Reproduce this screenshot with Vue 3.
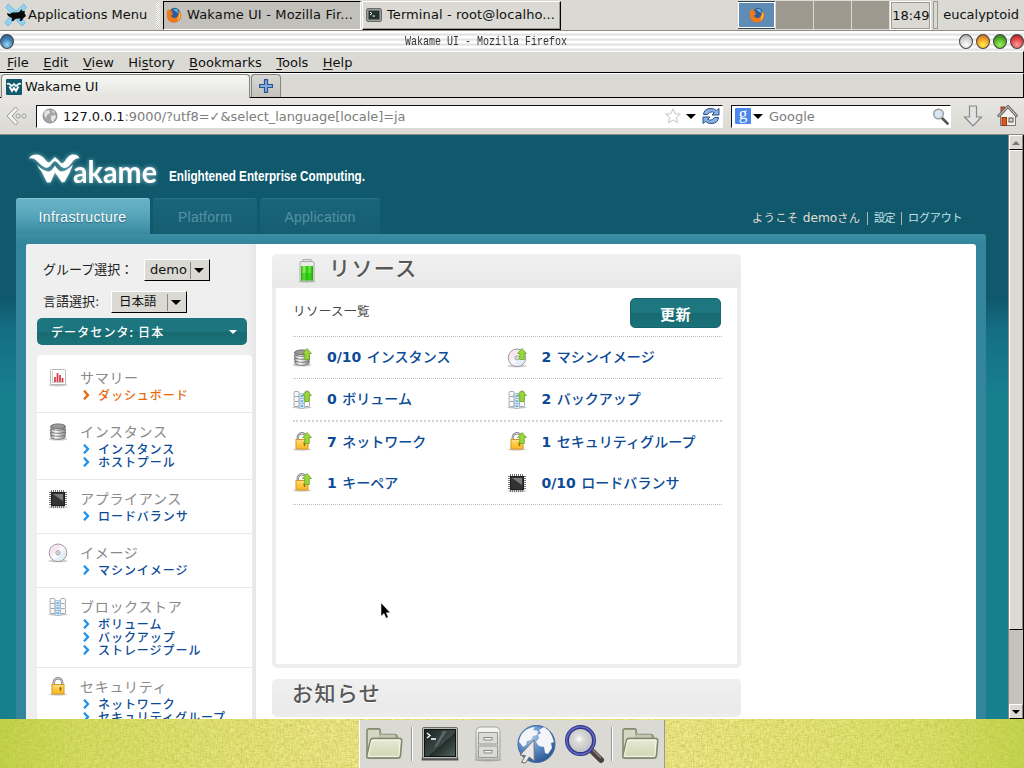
<script setup>
const menus = ['File', 'Edit', 'View', 'History', 'Bookmarks', 'Tools', 'Help'].map((m) => {
  const at = m === 'History' ? 2 : 0
  return { pre: m.slice(0, at), key: m[at], post: m.slice(at + 1) }
})

const groups = [
  { icon: 'i-chart', title: 'サマリー', links: ['ダッシュボード'], active: true },
  { icon: 'i-db', title: 'インスタンス', links: ['インスタンス', 'ホストプール'] },
  { icon: 'i-chip', title: 'アプライアンス', links: ['ロードバランサ'] },
  { icon: 'i-disc', title: 'イメージ', links: ['マシンイメージ'] },
  { icon: 'i-blocks', title: 'ブロックストア', links: ['ボリューム', 'バックアップ', 'ストレージプール'] },
  { icon: 'i-lock', title: 'セキュリティ', links: ['ネットワーク', 'セキュリティグループ'] },
]

const rows = [
  [
    { icon: 'i-db', up: true, n: '0/10', t: 'インスタンス' },
    { icon: 'i-disc', up: true, n: '2', t: 'マシンイメージ' },
  ],
  [
    { icon: 'i-blocks', up: true, n: '0', t: 'ボリューム' },
    { icon: 'i-blocks', up: true, n: '2', t: 'バックアップ' },
  ],
  [
    { icon: 'i-lock', up: true, n: '7', t: 'ネットワーク' },
    { icon: 'i-lock', up: true, n: '1', t: 'セキュリティグループ' },
  ],
  [
    { icon: 'i-lock', up: true, n: '1', t: 'キーペア' },
    { icon: 'i-chip', up: false, n: '0/10', t: 'ロードバランサ' },
  ],
]
</script>

<template>
  <div class="desktop">
    <svg class="defs" width="0" height="0">
      <defs>
        <linearGradient id="g-metal" x1="0" x2="1" y1="0" y2="0">
          <stop offset="0" stop-color="#999" /><stop offset=".35" stop-color="#fff" /><stop offset="1" stop-color="#888" />
        </linearGradient>
        <linearGradient id="g-gold" x1="0" x2="0" y1="0" y2="1">
          <stop offset="0" stop-color="#ffe08a" /><stop offset=".5" stop-color="#fcc93a" /><stop offset="1" stop-color="#f9b62a" />
        </linearGradient>
        <linearGradient id="g-disc" x1="0" x2="1" y1="0" y2="1">
          <stop offset="0" stop-color="#f2f6fb" /><stop offset=".3" stop-color="#f8e2f2" /><stop offset=".5" stop-color="#fcfcfc" />
          <stop offset=".7" stop-color="#e0ecfb" /><stop offset="1" stop-color="#eefbe4" />
        </linearGradient>
        <linearGradient id="g-green" x1="0" x2="1" y1="0" y2="0">
          <stop offset="0" stop-color="#2fa70a" /><stop offset=".25" stop-color="#9cf26a" /><stop offset=".5" stop-color="#22c410" /><stop offset=".7" stop-color="#66ee3c" /><stop offset="1" stop-color="#1fa008" />
        </linearGradient>
        <linearGradient id="g-folder" x1="0" x2="0" y1="0" y2="1">
          <stop offset="0" stop-color="#e6ead6" /><stop offset="1" stop-color="#cdd6b0" />
        </linearGradient>
        <linearGradient id="g-cab" x1="0" x2="0" y1="0" y2="1">
          <stop offset="0" stop-color="#f7f7f5" /><stop offset="1" stop-color="#c4c4c0" />
        </linearGradient>
        <linearGradient id="g-term" x1="0" x2="1" y1="0" y2="1">
          <stop offset="0" stop-color="#1b2422" /><stop offset=".55" stop-color="#3c4a46" /><stop offset=".56" stop-color="#222d2a" /><stop offset="1" stop-color="#53635e" />
        </linearGradient>
        <radialGradient id="g-globe" cx=".35" cy=".3" r=".75">
          <stop offset="0" stop-color="#a9c8ea" /><stop offset=".5" stop-color="#5c8cc6" /><stop offset="1" stop-color="#2a5592" />
        </radialGradient>
        <radialGradient id="g-lens" cx=".45" cy=".45" r=".6">
          <stop offset="0" stop-color="#fff" /><stop offset=".25" stop-color="#dcdcda" /><stop offset="1" stop-color="#b5b7bb" />
        </radialGradient>
        <radialGradient id="g-fox" cx=".5" cy=".3" r=".7">
          <stop offset="0" stop-color="#ffd23c" /><stop offset=".6" stop-color="#f58a1c" /><stop offset="1" stop-color="#c8401a" />
        </radialGradient>
        <symbol id="i-chart" viewBox="0 0 20 20">
          <ellipse cx="10" cy="17" rx="9.5" ry="1.4" fill="#ccc" />
          <rect x="2.5" y="1.500" width="15" height="15" rx="1" fill="#fff" stroke="#b9b9b9" />
          <path d="M4.500 3.500v11h11.500" fill="none" stroke="#999" stroke-dasharray="1 1" />
          <path d="M7 14V9M9.500 14V5M12 14V7M14.500 14v-4" stroke="#d8343c" stroke-width="1.700" />
        </symbol>
        <symbol id="i-db" viewBox="0 0 20 20">
          <ellipse cx="10" cy="17" rx="9.500" ry="1.600" fill="#ccc" />
          <g fill="url(#g-metal)" stroke="#6a6a6a" stroke-width=".8">
            <path d="M2.800 13v1.600c0 3.600 14.400 3.600 14.400 0V13z" /><path d="M2.400 10v1.600c0 3.600 15.200 3.600 15.200 0V10z" />
            <path d="M2.400 7v1.600c0 3.600 15.200 3.600 15.200 0V7z" /><path d="M2.800 4v1.600c0 3.600 14.400 3.600 14.400 0V4z" />
          </g>
          <ellipse cx="10" cy="4.300" rx="7.200" ry="2.400" fill="#999" stroke="#606060" stroke-width=".8" />
        </symbol>
        <symbol id="i-chip" viewBox="0 0 20 20">
          <ellipse cx="10" cy="18" rx="9.800" ry="1.300" fill="#ccc" />
          <path d="M3.500 1v18M5.500 1v18M7.500 1v18M9.500 1v18M11.500 1v18M13.500 1v18M15.500 1v18M1 3.500h18M1 5.500h18M1 7.500h18M1 9.500h18M1 11.500h18M1 13.500h18M1 15.500h18" stroke="#777" />
          <rect x="3.500" y="3.500" width="13" height="13" fill="#333" stroke="#1f1f1f" />
          <path d="M5 5h10v7z" fill="#999" opacity=".7" />
        </symbol>
        <symbol id="i-disc" viewBox="0 0 20 20">
          <ellipse cx="10" cy="18" rx="9.800" ry="1.300" fill="#ccc" />
          <circle cx="10" cy="9.800" r="8.800" fill="url(#g-disc)" stroke="#929292" stroke-width=".9" />
          <circle cx="10" cy="9.800" r="2.100" fill="#fff" stroke="#8c8c8c" stroke-width=".9" />
          <circle cx="10" cy="9.800" r=".7" fill="#888" />
        </symbol>
        <symbol id="i-blocks" viewBox="0 0 20 20">
          <ellipse cx="10" cy="17.300" rx="9.800" ry="1.200" fill="#c4c4c4" />
          <g fill="#f8f8f8" stroke="#989898" stroke-width=".8">
            <rect x="2" y="1.500" width="5" height="5" rx="1" /><rect x="2" y="6.500" width="5" height="5" rx="1" /><rect x="2" y="11.500" width="5" height="5" rx="1" />
            <rect x="12.500" y="1.500" width="5" height="5" rx="1" /><rect x="12.500" y="6.500" width="5" height="5" rx="1" /><rect x="12.500" y="11.500" width="5" height="5" rx="1" />
          </g>
          <g fill="#d5ebfc" stroke="#9bb0c0" stroke-width=".8">
            <rect x="7.300" y="3.500" width="5" height="5" rx="1" /><rect x="7.300" y="8.500" width="5" height="5" rx="1" /><rect x="7.300" y="13.500" width="5" height="5" rx="1" />
          </g>
          <path d="M8.500 6.200h2.600M8.500 11.200h2.600M8.500 16.200h2.600" stroke="#62b0ee" stroke-width="1.800" />
        </symbol>
        <symbol id="i-lock" viewBox="0 0 20 20">
          <ellipse cx="10" cy="17.500" rx="9.300" ry="1.200" fill="#ccc" />
          <path d="M5.800 9V5.500a4.200 4.200 0 0 1 8.400 0V9" fill="none" stroke="#777" stroke-width="2.400" />
          <path d="M5.800 9V5.500a4.200 4.200 0 0 1 8.400 0V9" fill="none" stroke="#e4e4e4" stroke-width=".9" />
          <rect x="4" y="7.500" width="12" height="9.500" fill="url(#g-gold)" stroke="#d8962a" />
          <path d="M12.500 11v3" stroke="#8b6410" stroke-width="1.300" /><circle cx="12.500" cy="11.200" r="1.100" fill="#8b6410" />
        </symbol>
        <symbol id="i-up" viewBox="0 0 10 12">
          <path d="M5 .5L9.500 5.500H7.300v6H2.700v-6H.5z" fill="#98d43a" stroke="#6aab22" stroke-width=".8" />
        </symbol>
        <symbol id="i-fox" viewBox="0 0 16 16">
          <circle cx="8" cy="8.300" r="7.200" fill="url(#g-fox)" />
          <circle cx="8.800" cy="6" r="5.200" fill="#2b5c9e" /><path d="M7 2l4 0 2 4-3-1z" fill="#5fb4dc" />
          <path d="M1 4l1.500-2 1.200 2 3-.2-1.200 2 1.800.8c-.3 1.700-2.300 1.500-2.300 2.200 1 3 5.500 2.600 6.500.4 1-1.500 1.200-3 .8-5 3 3.500 3.300 8-1.300 10.500-5 2-10-1-10-6z" fill="#ee7a1b" />
          <path d="M13.500 4.500c1.800 4 .6 8-2.500 9.600 1.500-3 2-5 2.500-9.600z" fill="#fcc534" />
        </symbol>
        <symbol id="i-folder" viewBox="0 0 40 36">
          <path d="M2 32V4q0-2 2-2h10q2 0 2 2v4h15q3 0 3 3v21z" fill="#d3d8c3" stroke="#84896f" stroke-width="1.700" />
          <path d="M16 10V5l2 3h13q2 0 2 3v3H9" fill="#c6ccb4" stroke="#979c83" />
          <path d="M5.500 15q.2-3 3-3h28q2.500 0 2.200 3l-1.200 15q-.3 3-3 3H4q-2.500 0-2.200-3z" fill="url(#g-folder)" stroke="#84896f" stroke-width="1.700" />
          <path d="M7 14h30l-1.500 17H3.500z" fill="none" stroke="#f6f8ee" />
        </symbol>
      </defs>
    </svg>

    <header class="panel">
      <svg class="mouse" width="24" height="24" viewBox="0 0 24 24">
        <path d="M4 1l8 7 8-7 2.500 3.500-7.500 7 6.500 8-3.500 3.500-7-7-7 7L.8 19.500l7-8L2 4.500z" fill="#8fd3f0" stroke="#5aa9cc" stroke-width=".6" />
        <path d="M3 10l3 1 2-1.500 7-.2 2.500-3 1 2L21 8l-.5 2 1.500 3-2.500 2-2 3-2-.2 1-2.300-5 .2-2 2.300-2-.2.500-2.800L5 13.500 3.500 12z" fill="#080808" />
      </svg>
      <span class="apps">Applications Menu</span>
      <i class="grip"></i>
      <div class="task pressed"><svg width="16" height="16"><use href="#i-fox" /></svg><span>Wakame UI - Mozilla Fir...</span></div>
      <div class="task"><svg width="16" height="14" viewBox="0 0 16 14">
        <rect x=".7" y=".7" width="14.600" height="12.600" rx="1" fill="#aaa" stroke="#555" /><rect x="2.500" y="2.500" width="11" height="9" fill="#24302d" />
        <path d="M4 4l2 1.500L4 7M6.500 8H9" stroke="#fff" fill="none" />
      </svg><span>Terminal - root@localho...</span></div>
      <div class="pager"><div class="ws on"><svg width="16" height="16"><use href="#i-fox" /></svg></div><div class="ws"></div><div class="ws"></div><div class="ws"></div></div>
      <div class="clock">18:49</div>
      <i class="sep"></i>
      <span class="user">eucalyptoid</span>
    </header>

    <div class="titlebar">
      <i class="ball blue"></i>
      <span class="wtitle">Wakame UI - Mozilla Firefox</span>
      <span class="balls"><i class="ball silver"></i><i class="ball amber"></i><i class="ball green"></i><i class="ball red"></i></span>
    </div>

    <nav class="menubar">
      <span v-for="m in menus" :key="m.key + m.post">{{ m.pre }}<u>{{ m.key }}</u>{{ m.post }}</span>
    </nav>

    <div class="tabstrip">
      <div class="btab">
        <svg width="16" height="16" viewBox="0 0 16 16"><rect width="16" height="16" rx="1" fill="#105a6e" />
          <path d="M1 5q2-1 3.500 1L6 7l2-2 2 2 1.500-1Q13 4 15 5" fill="none" stroke="#fff" stroke-width="1.700" /><path d="M3.500 7.500L6 12l2-3 2 3 2.500-4.500" fill="none" stroke="#fff" stroke-width="1.900" /></svg>
        <span>Wakame UI</span>
      </div>
      <div class="newtab"><svg width="14" height="14" viewBox="0 0 14 14"><path d="M5.500 .6h3v4.900h4.900v3H8.500v4.900h-3V8.500H.6v-3h4.900z" fill="#88aede" stroke="#2a559b" stroke-width="1.200" /></svg></div>
    </div>

    <div class="navbar">
      <svg class="back" width="22" height="20" viewBox="0 0 22 20">
        <path d="M9.500 1L1 10l8.500 9 2.500-2.500L6 10l6-6.500z" fill="#f2f2ef" stroke="#999893" /><circle cx="12" cy="10" r="2" fill="#eee" stroke="#999" /><circle cx="18" cy="10" r="2" fill="#eee" stroke="#999" />
      </svg>
      <div class="url">
        <svg width="16" height="16" viewBox="0 0 16 16"><circle cx="8" cy="8" r="7" fill="#a5a5a5" stroke="#8c8c8c" /><path d="M3 3l4-1 1 3-3 2-1 3-2-3zM9 8l4-1 1 2-3 5-2-2zM10 2l3 2-2 1z" fill="#e4e4e4" /></svg>
        <span class="addr"><b>127.0.0.1</b>:9000/?utf8=✓&amp;select_language[locale]=ja</span>
        <svg width="16" height="16" viewBox="0 0 16 16"><path d="M8 .8l2.100 4.900 5.200.4-4 3.400 1.300 5.200L8 12l-4.600 2.700 1.300-5.200-4-3.400 5.200-.4z" fill="#fff" stroke="#c4c4c4" /></svg>
        <i class="tri"></i>
        <svg class="reload" width="18" height="18" viewBox="0 0 18 18">
          <path d="M1.500 7.500Q2 2 8 1.500q4-.3 6.500 2L17 1.500v6.500h-7l2.300-2.300Q9 3.300 5.500 7.500z" fill="#8cb0e0" stroke="#27508f" /><path d="M16.500 10.500Q16 16 10 16.500q-4 .3-6.500-2L1 16.500V10h7l-2.300 2.300Q9 14.700 12.500 10.500z" fill="#8cb0e0" stroke="#27508f" />
        </svg>
      </div>
      <div class="search">
        <span class="g">g</span><i class="tri"></i><span class="ph">Google</span>
        <svg width="17" height="17" viewBox="0 0 17 17"><path d="M10 10l5.500 5.500" stroke="#555" stroke-width="2.600" stroke-linecap="round" /><circle cx="6.500" cy="6" r="4.800" fill="#d6e6f4" stroke="#999" stroke-width="1.400" /></svg>
      </div>
      <svg class="down" width="20" height="22" viewBox="0 0 20 22"><path d="M6.500 1h7v11h5L10 21 1.500 12h5z" fill="#e1e3e3" stroke="#858989" stroke-width="1.200" /></svg>
      <svg class="home" width="21" height="22" viewBox="0 0 21 22">
        <rect x="4" y="2" width="3.500" height="7" fill="#cb6434" stroke="#8b3c1a" /><path d="M3.500 11v9.500h15V11L11 3z" fill="#f2f1ec" stroke="#777" />
        <path d="M.8 11.500L11 1.300l9.300 10.200" fill="none" stroke="#666" stroke-width="2.600" /><path d="M1.500 11L11 1.500l8.700 9.500" fill="none" stroke="#ddd" />
        <rect x="5" y="12.500" width="4.500" height="8" fill="#dc5a1e" stroke="#933711" /><rect x="12" y="13" width="4" height="4" fill="#d8d4c8" stroke="#555" />
      </svg>
    </div>

    <div class="view">
      <div class="page">
        <div class="brand">
          <svg width="360" height="50" viewBox="0 0 360 50">
            <g class="glow" fill="#fff">
              <path d="M13 10.500Q14.500 6.500 21 6.500q5 .5 8.500 5.500 2.800 4 5 1.500 2.300-2.500 4.500-4.500 3 2.500 5 5 2.500 3 5-1 3.500-6 7.500-6.500 5.500-.5 7 4-4-1-7.500 4-4 5-7 5.500-3.500.5-5.500-3-2.200-3-4.500-4-2.500 1-4.500 4.500-2.200 3-5.500 2-3.500-1.500-7-5.500Q18 9 13 10.500z" />
              <path d="M21 17q7 6.500 11.500 6.500 3 0 6.500-6 3.500 6 7 6 4 0 11-7l-3 7.500L48.500 34 46 34.500l-7-10-4.500 10H31L25.500 23.500Q23 21 21 17z" />
              <text class="akame" x="57" y="34.500" textLength="84" lengthAdjust="spacingAndGlyphs">akame</text>
            </g>
            <text class="tagline" transform="translate(153 33) scale(1 1.06)" textLength="196" lengthAdjust="spacingAndGlyphs">Enlightened Enterprise Computing.</text>
          </svg>
        </div>
        <div class="toprow">
          <div class="tab sel">Infrastructure</div>
          <div class="tab t2">Platform</div>
          <div class="tab t3">Application</div>
          <div class="welcome"><span class="warm"><em>ようこそ</em> demo<em>さん</em></span><s></s><em class="conf">設定</em><s></s><em class="out">ログアウト</em></div>
        </div>
        <div class="frame">
          <div class="inner">
            <aside>
              <div class="pick p1"><span>グループ選択：</span><div class="select">demo<i><b class="tri"></b></i></div></div>
              <div class="pick p2"><span>言語選択:</span><div class="select jp">日本語<i><b class="tri"></b></i></div></div>
              <div class="dc"><span>データセンタ: 日本</span><b></b></div>
              <div class="groups">
                <section v-for="g in groups" :key="g.title">
                  <svg width="20" height="20"><use :href="'#' + g.icon" /></svg>
                  <h4>{{ g.title }}</h4>
                  <a v-for="l in g.links" :key="l" :class="{ active: g.active }">
                    <svg width="7" height="10" viewBox="0 0 7 10"><path d="M1 .7L5 5 1 9.300" fill="none" stroke="currentColor" stroke-width="2.300" /></svg><span>{{ l }}</span>
                  </a>
                </section>
              </div>
            </aside>
            <main>
              <article class="card res">
                <h2 class="head">
                  <svg width="18" height="24" viewBox="0 0 18 24"><ellipse cx="9" cy="22.500" rx="9" ry="1.200" fill="#bbb" />
                    <rect x="5" y=".6" width="8" height="3" fill="#eee" stroke="#aaa" /><rect x="2" y="2.500" width="14" height="19.500" rx="1" fill="#e8eee6" stroke="#a8aaa8" /><rect x="3" y="7" width="12" height="14.500" fill="url(#g-green)" /><path d="M3 14h12v7.500H3z" fill="#14b800" opacity=".45" /></svg>
                  <span>リソース</span>
                </h2>
                <div class="bar"><span>リソース一覧</span><button>更新</button></div>
                <div class="list">
                  <div v-for="(r, i) in rows" :key="i" class="row">
                    <div v-for="c in r" :key="c.t" class="cell">
                      <span class="ico"><svg width="20" height="20"><use :href="'#' + c.icon" /></svg><svg v-if="c.up" class="up" width="10" height="12"><use href="#i-up" /></svg></span>
                      <span>{{ c.n }} <em>{{ c.t }}</em></span>
                    </div>
                  </div>
                </div>
              </article>
              <article class="card news"><h2 class="head"><span>お知らせ</span></h2></article>
            </main>
          </div>
        </div>
      </div>
      <div class="scroll">
        <div class="sb"><i class="arr upa"></i></div>
        <div class="thumb"></div>
        <div class="trough"></div>
        <div class="sb"><i class="arr dna"></i></div>
      </div>
    </div>

    <footer class="wall">
      <svg class="grain" width="1024" height="49">
        <filter id="weave-h" x="0" y="0" width="1" height="1"><feTurbulence type="fractalNoise" baseFrequency=".2 .8" numOctaves="2" seed="4" /><feColorMatrix values="0 0 0 0 .5  0 0 0 0 .5  0 0 0 0 .05  1.100 0 0 0 -.42" /></filter>
        <filter id="weave-v" x="0" y="0" width="1" height="1"><feTurbulence type="fractalNoise" baseFrequency=".8 .2" numOctaves="2" seed="9" /><feColorMatrix values="0 0 0 0 .5  0 0 0 0 .5  0 0 0 0 .05  1.100 0 0 0 -.42" /></filter>
        <rect width="1024" height="49" filter="url(#weave-h)" /><rect width="1024" height="49" filter="url(#weave-v)" />
      </svg>
      <div class="dock">
        <svg width="38" height="34"><use href="#i-folder" /></svg>
        <i></i>
        <svg width="38" height="36" viewBox="0 0 38 36"><path d="M1 31h36l.5 3.500H.5z" fill="#555" /><rect x="1.500" y="1.500" width="35" height="31" rx="1.500" fill="#b8bab6" stroke="#6c6e6a" /><rect x="3.500" y="3.500" width="31" height="27" fill="url(#g-term)" stroke="#111" />
          <path d="M22 5l-9 17 3-2L26 5z" fill="#889" opacity=".5" /><path d="M6 7l3 2.500L6 12M10 13h5" stroke="#fff" stroke-width="1.300" fill="none" /></svg>
        <svg width="28" height="36" viewBox="0 0 28 36"><ellipse cx="14" cy="34" rx="13" ry="1.500" fill="#aaa" /><path d="M2 5q1-4 4-4h16q3 0 4 4v29H2z" fill="url(#g-cab)" stroke="#a3a39f" />
          <rect x="4.500" y="6.500" width="19" height="11.500" fill="#dadad7" stroke="#999" /><rect x="4.500" y="20" width="19" height="11.500" fill="#dadad7" stroke="#999" /><path d="M10 11v3h8v-3M10 24v3h8v-3M10 11.500h8M10 24.500h8" fill="#f5f5f5" stroke="#888" /></svg>
        <svg width="40" height="40" viewBox="0 0 40 40"><circle cx="20.500" cy="20" r="18.500" fill="url(#g-globe)" stroke="#3a65a2" />
          <path d="M3 18q1-8 7-12 5-3 9-3l-2 3 5 1-1 4-4 1-2 4-4 1-1 4-3 2-2-3zM23 6l5-3 5 4 3 5 2 6-3 1 1 5-4 6-3-1-1-6-5-1-3-4 3-4-1-3 3-2z" fill="#f3f5f8" />
          <path d="M18 16L4 31l5.500.5-4 7 4 .5 3.800-6 5 4z" fill="#e8e8e8" stroke="#707070" /></svg>
        <svg width="40" height="40" viewBox="0 0 40 40"><path d="M27 26l10 10" stroke="#4a423c" stroke-width="6" stroke-linecap="round" /><path d="M28 25l9 9" stroke="#8d857d" stroke-width="1.500" /><circle cx="16.500" cy="16.500" r="13.500" fill="url(#g-lens)" stroke="#35388a" stroke-width="4" /><circle cx="16.500" cy="16.500" r="13.700" fill="none" stroke="#6a70c8" stroke-width="1.300" /></svg>
        <i></i>
        <svg width="38" height="34"><use href="#i-folder" /></svg>
      </div>
    </footer>

    <svg class="pointer" width="12" height="19" viewBox="0 0 12 19"><path d="M1 .7v13.500l3-2.600 2 4.600 2.300-1-2-4.400h4z" fill="#000" stroke="#fff" stroke-width=".5" /></svg>
  </div>
</template>

<style>
html, body { overflow: hidden; }
</style>

<style scoped>
.desktop { position: relative; width: 1024px; height: 768px; display: flex; flex-direction: column; overflow: hidden; background: #dad9d3; color: #111; font: 13px/16px "DejaVu Sans", "Noto Sans CJK JP", sans-serif; white-space: nowrap; }
.desktop *, .desktop *::before { box-sizing: border-box; }
.defs { position: absolute; }
svg { display: block; flex: none; }
em { font-style: normal; }
h2, h4 { margin: 0; font-weight: 400; }
.tri { width: 0; height: 0; border: 5px solid transparent; border-top-color: #000; border-bottom: 0; }

.panel { height: 31px; flex: none; display: flex; align-items: center; border-bottom: 1px solid #8f8b83; padding: 0 5px 0 4px; }
.apps { width: 128px; }
.grip { width: 4px; height: 26px; background: repeating-conic-gradient(#fff 0 25%, #c9c8c2 0 50%) 0 0 / 2px 2px; }
.task { width: 199px; height: 29px; margin-left: 1px; display: flex; align-items: center; gap: 5px; padding: 0 2px; border: 1px solid; border-color: #fff #000 #000 #fff; box-shadow: inset -1px -1px #9e998f; letter-spacing: .09px; }
.grip + .task { margin-left: 3px; width: 198px; }
.task.pressed { background: #c1c0ba; border-color: #000 #fff #fff #000; box-shadow: none; letter-spacing: .16px; }
.task:not(.pressed) { padding-left: 3px; }
.pager { margin-left: auto; display: flex; gap: 1px; }
.ws { width: 37px; height: 28px; background: #9e998f; }
.ws.on { background: #5e8cb4; border: 1px solid #fff; display: grid; place-items: center; box-shadow: 0 1px #2f4558, 0 -1px #2f4558; height: 26px; margin-top: 1px; }
.clock { width: 39px; height: 27px; margin-left: 2px; border: 1px solid #9e998f; box-shadow: 0 0 0 1px #fff; line-height: 25px; text-align: center; }
.sep { width: 5px; height: 28px; margin-left: 3px; border: 1px solid #9e998f; }
.user { margin-left: 5px; }

.titlebar { height: 20px; flex: none; display: flex; align-items: center; justify-content: space-between; background: repeating-linear-gradient(#fff 0 2px, #e2e2e2 3px 4px, #f3f3f3 5px); padding: 1px 0 0; position: relative; }
.wtitle { position: absolute; left: 405px; top: 3px; font: 10px/16px "Liberation Mono", monospace; transform: scaleY(1.300); color: #333; }
.balls { display: flex; gap: 3px; }
.ball { width: 14px; height: 15px; border-radius: 50%; border: 1px solid #444; }
.blue { background: radial-gradient(circle at 50% 75%, #9fd6f8, #4181b8 50%, #1b4d84); }
.silver { background: radial-gradient(circle at 50% 75%, #fff, #ccc 60%, #999); }
.amber { background: radial-gradient(circle at 50% 75%, #fff34a, #f39a2a 55%, #a85a10); }
.green { background: radial-gradient(circle at 50% 75%, #a2f05c, #4fae2a 55%, #246a12); }
.red { background: radial-gradient(circle at 50% 75%, #ff9c9c, #dd4343 55%, #8a1a1a); }

.menubar { height: 22px; flex: none; display: flex; gap: 14.500px; padding-left: 7px; line-height: 21px; border-top: 1px solid #fff; border-bottom: 1px solid #000; border-right: 1px solid #000; }
u { text-underline-offset: 2px; }
.tabstrip { height: 25px; flex: none; display: flex; border-top: 1px solid #fff; border-bottom: 1px solid #000; border-right: 1px solid #000; align-items: flex-end; padding-left: 1px; }
.btab { width: 249px; height: 24px; margin-bottom: -1px; display: flex; align-items: center; gap: 3px; padding-left: 4px; background: linear-gradient(#f6f6f4, #e4e3df); border: 1px solid #858580; border-bottom: 0; border-radius: 4px 4px 0 0; }
.newtab { width: 30px; height: 23px; margin-left: 1px; display: grid; place-items: center; background: linear-gradient(#d8d7d2, #c3c2bc); border: 1px solid #85847e; border-bottom: 0; border-radius: 4px 4px 0 0; }
.navbar { height: 37px; flex: none; display: flex; align-items: center; padding: 0 6px; background: linear-gradient(#e7e6e3, #d9d8d2); border-bottom: 1px solid #8f8b83; }
.url { width: 687px; height: 23px; margin-left: 8px; display: flex; align-items: center; background: #fff; border: 1px solid; border-color: #111 #fff #fff #111; padding: 0 2px 0 5px; }
.addr { margin-left: 5px; flex: 1; color: #7d7d7d; letter-spacing: -.06px; padding-top: 1px; }
.addr b { font-weight: 400; color: #111; }
.url .tri { margin: 0 6px 0 5px; }
.search { width: 220px; height: 23px; margin-left: 8px; display: flex; align-items: center; background: #fff; border: 1px solid; border-color: #111 #fff #fff #111; padding: 0 1px 0 3px; }
.g { width: 16px; height: 16px; background: #4a87ee; color: #fff; font: 17px/12px "Liberation Serif", serif; text-align: center; border-radius: 1px; }
.search .tri { margin-left: 2px; }
.ph { flex: 1; margin-left: 6px; color: #7d7d7d; padding-top: 1px; }
.down { margin-left: 12px; }
.home { margin-left: 14px; }

.view { height: 584px; flex: none; display: flex; }
.page { width: 1008px; height: 584px; overflow: hidden; padding-left: 16px; background: linear-gradient(#10596d 0, #10596d 165px, #146e85 195px, #187f8f 260px, #187f8f 100%); }
.brand { height: 63px; padding-top: 13px; }
.glow { filter: drop-shadow(0 0 2px rgba(190, 235, 240, .7)); }
.akame { font: 700 30px Lato, sans-serif; }
.tagline { font: 700 13px "Liberation Sans Narrow", "Liberation Sans", sans-serif; fill: #fff; }
.toprow { height: 36px; display: flex; }
.tab { height: 36px; margin-right: 3px; border-radius: 3px 3px 0 0; font: 14px/36px "Liberation Sans", sans-serif; letter-spacing: .25px; text-align: center; background: linear-gradient(#1a657b, #155d71); border-top: 1px solid #256f84; color: #5593a3; width: 104px; }
.tab.t3 { width: 120px; }
.tab.sel { width: 134px; letter-spacing: .4px; background: linear-gradient(#67b2c6, #5ba8bd 40%, #388aa2); border-top-color: #83c5d4; color: #fff; text-shadow: 0 1px 1px #27687a; text-indent: -1px; }
.welcome { margin-left: auto; width: 256px; display: flex; align-items: center; height: 40px; font-size: 12.200px; color: #c2e2e8; }
.welcome em { font-size: 11px; font-weight: 400; }
.welcome .warm { color: #e5ded2; width: 108px; flex: none; }
.welcome .warm em { letter-spacing: .7px; }
.welcome s { flex: none; width: 1px; height: 13px; background: #b0b5ae; margin: 0 6px 0 7px; }
.welcome .conf { width: 20px; letter-spacing: -.5px; }
.welcome .out { letter-spacing: -.1px; }
.welcome > em { padding-top: 1px; }
.frame { width: 970px; height: 600px; padding: 10px; background: linear-gradient(#3c8ea5, #32859a 10px); border-radius: 0 3px 0 0; }
.inner { width: 950px; height: 600px; display: flex; background: #fff; border-radius: 3px 3px 0 0; overflow: hidden; }
aside { width: 230px; background: linear-gradient(90deg, #efefef 222px, #e6e6e6 230px); padding: 15px 0 0 11px; }
.pick { display: flex; align-items: center; height: 22px; padding-left: 6px; margin-bottom: 10px; font-weight: 400; font-size: 13px; color: #222; }
.p1 span { width: 101px; }
.p2 span { width: 68px; }
.select { width: 66px; height: 22px; display: flex; align-items: center; justify-content: space-between; padding-left: 5px; background: #dad9d3; border: 1px solid; border-color: #fff #000 #000 #fff; color: #111; }
.select.jp { width: 76px; padding-left: 7px; font-size: 12.500px; }
.select i { height: 17px; display: flex; align-items: center; border-left: 1px solid #888; padding: 0 5px 0 3px; }
.dc { width: 210px; height: 27px; margin-top: -5px; display: flex; align-items: center; justify-content: space-between; padding: 0 10px 0 14px; border-radius: 5px; background: linear-gradient(#1d767f 50%, #17696f 52%, #1b747b); color: #fff; font: 500 12px/26px "Noto Sans CJK JP", sans-serif; letter-spacing: 1.100px; }
.dc b { border: 4px solid transparent; border-top-color: #fff; border-bottom: 0; }
.groups { width: 215px; margin-top: 10px; padding-top: 4px; background: #fff; border-radius: 4px 4px 0 0; }
section { position: relative; padding: 10px 0 11px 43px; border-bottom: 1px solid #e8e8e8; }
section > svg { position: absolute; left: 11px; top: 9px; }
h4 { font: 400 14px/16px "Noto Sans CJK JP", sans-serif; color: #8a8a8a; letter-spacing: .7px; margin-bottom: 3px; }
a { display: flex; align-items: center; height: 13px; color: #1d92ee; }
a svg { margin: 0 8px 0 3px; }
a span { font: 500 12px/13px "Noto Sans CJK JP", sans-serif; color: #0b4a96; letter-spacing: .95px; }
a.active, a.active span { color: #e8680c; }
main { padding: 10px 0 0 16px; }
.card { width: 469px; border: 4px solid #ededed; border-top: 0; border-radius: 5px; background: #fff; }
.res { height: 414px; }
.news { height: 38px; margin-top: 11px; background: #ededed; }
.head { height: 34px; margin: 0 -4px; padding-left: 26px; display: flex; align-items: center; gap: 13px; border-radius: 5px 5px 0 0; background: linear-gradient(#f0f0f0, #e9e9e9); font: 500 21px/24px "Noto Sans CJK JP", sans-serif; color: #585858; letter-spacing: 1.400px; }
.head span { margin-top: -8px; text-shadow: 0 1px #fff; }
.news .head { padding-left: 20px; }
.bar { height: 48px; padding: 10px 16px 8px 17px; display: flex; justify-content: space-between; font: 400 12.500px/26px "Noto Sans CJK JP", sans-serif; letter-spacing: .4px; color: #444; }
button { width: 91px; height: 30px; border: 1px solid #16656d; border-radius: 5px; padding: 0; background: linear-gradient(#1e767e 50%, #176a71 52%, #1b727a); color: #fff; font: 700 15px/29px "Noto Sans CJK JP", sans-serif; letter-spacing: .5px; }
.list { width: 429px; margin-left: 17px; }
.row { height: 42px; border-top: 1px dotted #bbb; display: flex; align-items: center; }
.row:nth-child(3) { border-top-width: 2px; border-top-color: #d4d4d4; }
.row:nth-child(4) { height: 43px; border-top: 0; border-bottom: 1px dotted #bbb; }
.cell { width: 215px; margin-left: -1px; margin-right: 1px; display: flex; align-items: center; gap: 15px; font-size: 14px; font-weight: 700; color: #0b4a96; }
.cell > span:last-child { margin-top: -2px; }
.cell em { font-family: "Noto Sans CJK JP", sans-serif; font-size: 14px; font-weight: 500; line-height: 16px; letter-spacing: .05px; margin-left: .5px; }
.ico { position: relative; }
.up { position: absolute; right: 0; top: 0; }

.scroll { width: 16px; display: flex; flex-direction: column; background: #c3c2bc; border-left: 1px solid #8d8880; border-right: 1px solid #000; }
.sb { height: 15px; flex: none; background: #dad9d3; border: 1px solid; border-color: #fff #8d8880 #000 #fff; display: grid; place-items: center; }
.thumb { height: 480px; background: #dad9d3; border: 1px solid; border-color: #fff #8d8880 #000 #fff; }
.trough { flex: 1; }
.arr { border: 4px solid transparent; }
.upa { border-top: 0; border-bottom-color: #777; }
.dna { border-bottom: 0; border-top-color: #000; }

.wall { position: relative; height: 49px; flex: none; display: flex; justify-content: center; background: linear-gradient(90deg, #c2d64a, #d6e166 8%, #e5e67c 20%, #f4ea92 34%, #f5eb93 66%, #e8e87e 80%, #dde570 90%, #c4d850); }
.grain { position: absolute; left: 0; top: 0; }
.dock { position: relative; width: 306px; height: 48px; margin-top: 1px; display: grid; grid-template-columns: 48px 8px repeat(4, 48px) 8px 48px; place-items: center; background: #dad9d3; border-left: 1px solid #fff; border-right: 1px solid #999; }
.dock i { width: 2px; height: 34px; border-left: 1px solid #999; border-right: 1px solid #fff; }
.pointer { position: absolute; left: 380px; top: 602px; }
</style>
